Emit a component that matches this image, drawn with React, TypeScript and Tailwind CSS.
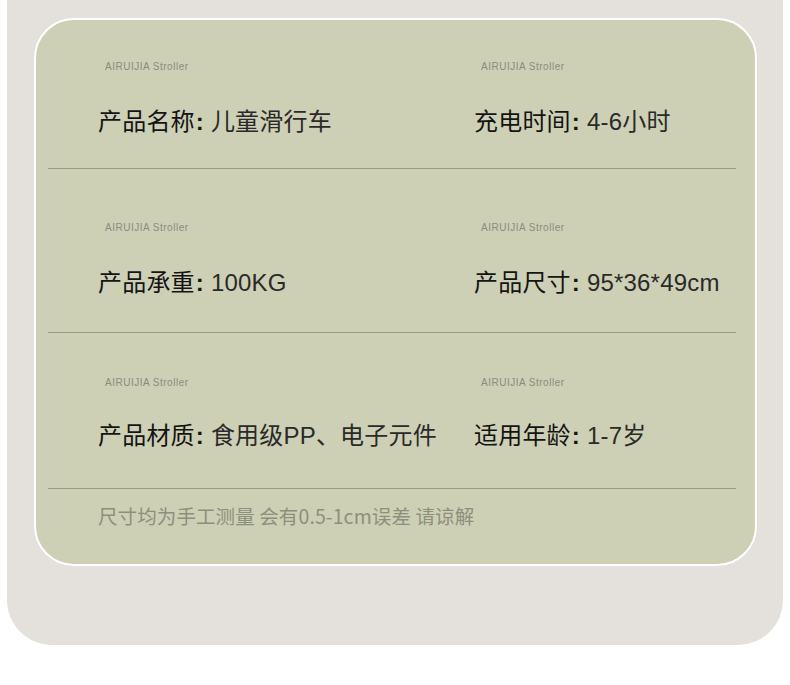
import React from "react";

const LABEL = "AIRUIJIA Stroller";

function Row({
  items,
  pt,
  gap,
  pb,
}: {
  items: [string, string][];
  pt: string;
  gap: string;
  pb: string;
}) {
  return (
    <div className={`grid grid-cols-[376px_1fr] pl-[50px] ${pt} ${pb}`}>
      {items.map(([k, v]) => (
        <div key={k} className="flex flex-col">
          <div className="pl-[7px] text-[10px] leading-[12px] tracking-[0.5px] text-[#8a8c7c] font-['Liberation_Sans',sans-serif]">
            {LABEL}
          </div>
          <div
            className={`${gap} text-[24px] leading-[30px] tracking-[0.2px] whitespace-nowrap font-['Liberation_Sans','Noto_Sans_CJK_SC',sans-serif]`}
          >
            <span className="text-[#141414]">{k}</span>
            <span className="text-[#141414] font-bold ml-[1px]">:</span>
            <span className="text-[#2a2a2a]"> {v}</span>
          </div>
        </div>
      ))}
    </div>
  );
}

export default function App() {
  return (
    <div className="w-[790px] h-[685px] bg-white">
      <div className="ml-[7px] w-[776px] h-[645px] bg-[#e4e1dc] rounded-b-[45px] pt-[18px]">
        <div className="ml-[27px] w-[723px] h-[548px] border-2 border-white rounded-[40px] bg-[#cdd0b5] overflow-hidden">
          <div className="ml-[12px] w-[688px]">
            <Row
              items={[
                ["产品名称", "儿童滑行车"],
                ["充电时间", "4-6小时"],
              ]}
              pt="pt-[41px]"
              gap="mt-[34px]"
              pb="pb-[31px]"
            />
            <div className="h-px bg-[#999c86]" />
            <Row
              items={[
                ["产品承重", "100KG"],
                ["产品尺寸", "95*36*49cm"],
              ]}
              pt="pt-[53px]"
              gap="mt-[34px]"
              pb="pb-[34px]"
            />
            <div className="h-px bg-[#999c86]" />
            <Row
              items={[
                ["产品材质", "食用级PP、电子元件"],
                ["适用年龄", "1-7岁"],
              ]}
              pt="pt-[44px]"
              gap="mt-[32px]"
              pb="pb-[37px]"
            />
            <div className="h-px bg-[#999c86]" />
            <div className="pl-[50px] pt-[15px] text-[19.5px] leading-[24px] tracking-[0.1px] text-[#8d8f7e] font-['Noto_Sans_CJK_SC',sans-serif]">
              尺寸均为手工测量 会有0.5-1cm误差 请谅解
            </div>
          </div>
        </div>
      </div>
    </div>
  );
}
